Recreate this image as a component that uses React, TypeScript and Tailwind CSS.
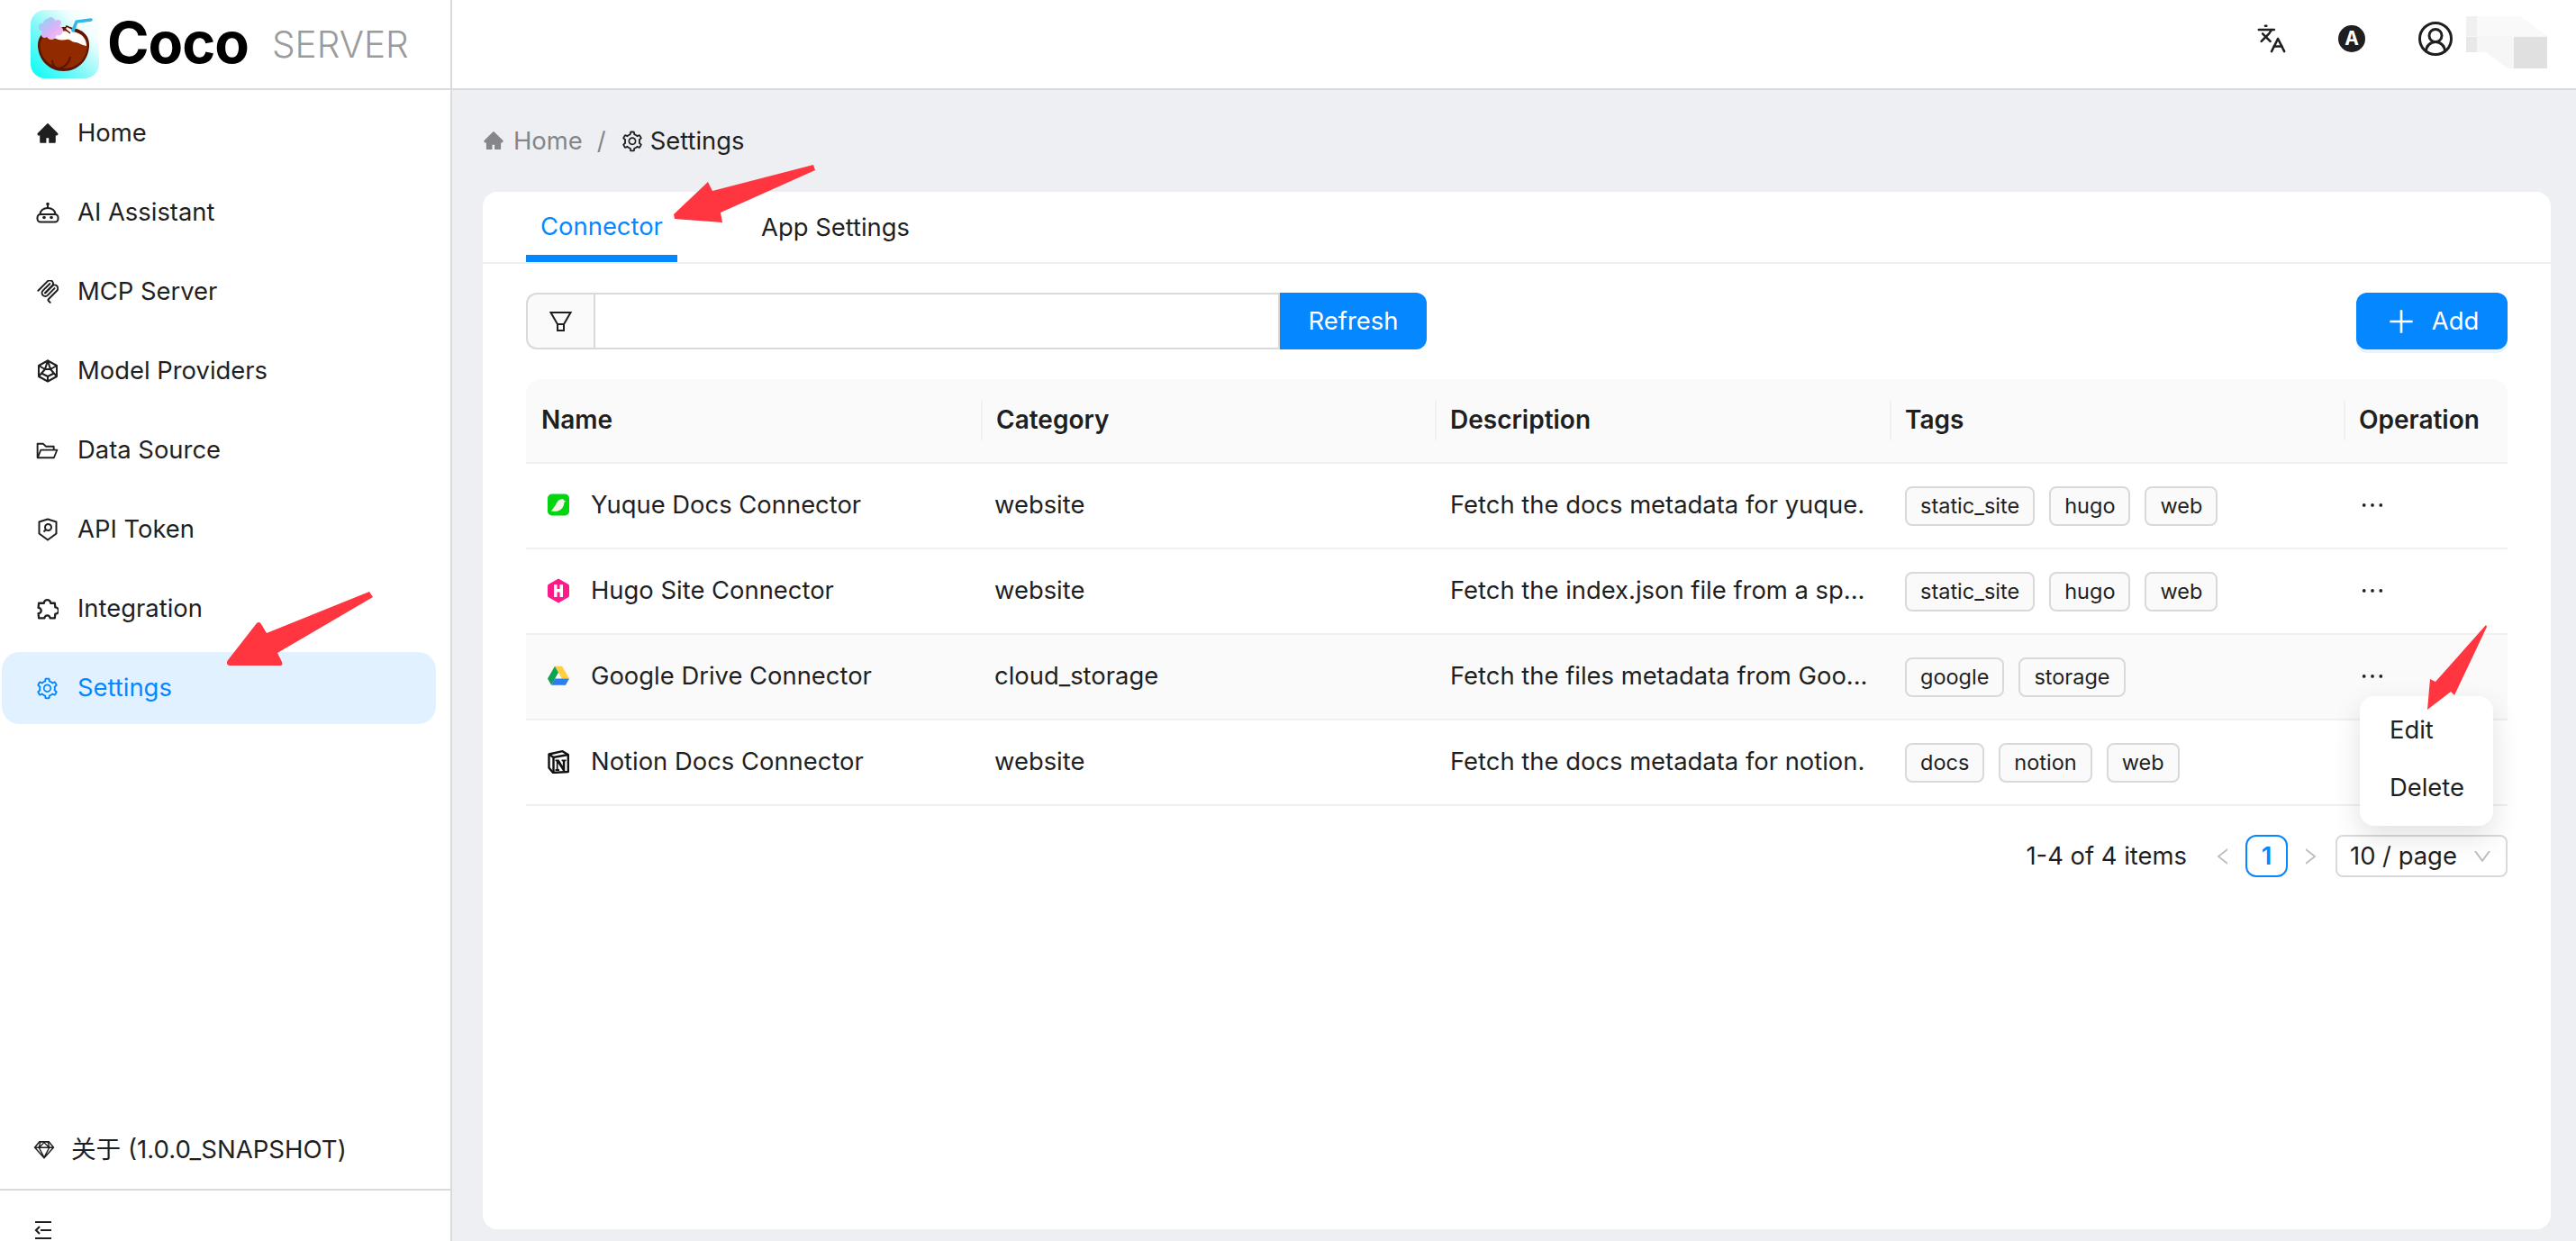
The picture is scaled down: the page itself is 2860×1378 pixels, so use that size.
import { type FC, type ReactNode } from 'react';
import { CircleUserRound, Languages } from 'lucide-react';
import {
  AiFillHome,
  AiOutlineDown,
  AiOutlineEllipsis,
  AiOutlineFolderOpen,
  AiOutlineLeft,
  AiOutlinePlus,
  AiOutlineRight,
  AiOutlineSetting,
  AiOutlineSketch,
} from 'react-icons/ai';

const RobotIcon = () => (
  <svg viewBox="0 0 26 24" className="h-[24px] w-[26px]" fill="none" stroke="currentColor" strokeWidth="2">
    <circle cx="13" cy="2.500" r="1.800" fill="currentColor" stroke="none" />
    <path d="M13 3v4" />
    <path d="M4.500 14c0-4 3.500-7 8.500-7s8.500 3 8.500 7" />
    <rect x="1.500" y="14" width="23" height="8.500" rx="3.500" />
    <circle cx="9" cy="17.500" r="1.800" fill="currentColor" stroke="none" />
    <circle cx="17" cy="17.500" r="1.800" fill="currentColor" stroke="none" />
  </svg>
);

const McpIcon = () => (
  <svg viewBox="10 8 155 170" className="h-[26px] w-[24px]" fill="none" stroke="currentColor" strokeWidth="13" strokeLinecap="round">
    <path d="M18 84.8528L85.8822 16.9706C95.2548 7.59798 110.451 7.59798 119.823 16.9706C129.196 26.3431 129.196 41.5391 119.823 50.9117L68.5581 102.177" />
    <path d="M69.2652 101.47L119.823 50.9117C129.196 41.5391 144.392 41.5391 153.765 50.9117L154.118 51.2652C163.491 60.6378 163.491 75.8338 154.118 85.2063L92.7248 146.6C89.6006 149.724 89.6006 154.789 92.7248 157.913L105.331 170.52" />
    <path d="M102.853 33.9411L52.6482 84.1457C43.2756 93.5183 43.2756 108.714 52.6482 118.087C62.0208 127.459 77.2167 127.459 86.5893 118.087L136.794 67.8822" />
  </svg>
);

const CubeIcon = () => (
  <svg viewBox="0 0 24 26" className="h-[26px] w-[24px]" fill="none" stroke="currentColor" strokeWidth="2" strokeLinejoin="round">
    <path d="M12 1.500l10 5.500v12l-10 5.500L2 19V7z" />
    <path d="M2 7l7 4 3-9.500 3 9.500 7-4M9 11l-7 8M15 11l7 8M9 11h6M6 16l6 3 6-3M12 19v5.500" />
  </svg>
);

const ShieldIcon = () => (
  <svg viewBox="0 0 22 26" className="h-[26px] w-[22px]" fill="none" stroke="currentColor" strokeWidth="2" strokeLinejoin="round">
    <path d="M11 1.500l9.500 3v13L11 24.500 1.500 17.500v-13z" />
    <circle cx="11.500" cy="10.500" r="3.500" />
    <path d="M9 13l-2.500 2.500" />
  </svg>
);

const PuzzleIcon = () => (
  <svg viewBox="0 0 24 24" className="h-[25px] w-[25px]" fill="none" stroke="currentColor" strokeWidth="2.200" strokeLinejoin="round">
    <path d="M8.500 5.500a3.500 3.500 0 0 1 7 0h4.500l.5 4.500a3.500 3.500 0 0 1 0 7l-.5 4.500h-5a3 3 0 0 0-6 0H3l-.5-5a3 3 0 0 0 0-6L3 5.500z" />
  </svg>
);

const FilterIcon = () => (
  <svg viewBox="0 0 25 22" className="h-[22px] w-[25px]" fill="none" stroke="#1f1f1f" strokeWidth="2" strokeLinejoin="miter">
    <path d="M1.500 1h22L16 14v7H9v-7z" />
    <path d="M9 14h7" />
  </svg>
);

const YuqueIcon = () => (
  <svg viewBox="0 0 25 25" className="h-[25px] w-[25px]">
    <rect width="25" height="25" rx="5" fill="#00d50f" />
    <path d="M4 20l5-7c2-3 3-7 8-7 1 0 2 .6 2.200 1.800l2.300.7-2.300 1c0 5-3 9.500-8.200 10.500z" fill="#f6f3ea" />
  </svg>
);

const HugoIcon = () => (
  <svg viewBox="0 0 24 28" className="h-[28px] w-[25px]">
    <path d="M12 .5l10.500 6c1 .6 1.500 1.500 1.500 2.500v10c0 1-.5 2-1.500 2.500L12 27.500 1.500 21.500C.5 21 0 20 0 19V9c0-1 .5-1.900 1.500-2.500z" fill="#ff1a8a" />
    <path d="M7 7h3.500v5h3V7H17v14h-3.500v-5.500h-3V21H7z" fill="#fff" />
  </svg>
);

const DriveIcon = () => (
  <svg viewBox="0 0 28 25" className="h-[25px] w-[28px]">
    <path d="M9.300 0h9.400l9.300 16h-9.400z" fill="#ffcf3f" />
    <path d="M9.300 0L0 16l4.700 8.500L14 8z" fill="#12a150" />
    <path d="M9.300 16H28l-4.700 8.500H4.700z" fill="#2d7cf0" />
  </svg>
);

const NotionIcon = () => (
  <svg viewBox="0 0 24 26" className="h-[26px] w-[24px]" fill="none">
    <path d="M1.500 4.500l15-3.300 6.300 3.800v19l-16.800 1-4.500-5.500z" fill="#fff" stroke="#111" strokeWidth="2.400" strokeLinejoin="round" />
    <path d="M1.500 4.500l5 3.500 16.300-3M6.500 8v17" stroke="#111" strokeWidth="2.400" />
    <path d="M8.500 10.500h4l4.300 7v-5l-1.300-.4v-1.600h5v1.600l-1.200.4V23h-2.300l-5.500-8.500v6.300l1.500.4V23H8.500v-1.800l1.300-.4v-8.300l-1.300-.4z" fill="#111" />
  </svg>
);

const CocoLogo = () => (
  <svg viewBox="0 0 76 76" className="h-[76px] w-[76px] shrink-0">
    <defs>
      <linearGradient id="cocoBg" x1="0" y1="1" x2="1" y2="0">
        <stop offset="0" stopColor="#00fbf5" />
        <stop offset="0.45" stopColor="#8df8f8" />
        <stop offset="0.75" stopColor="#f2fefe" />
        <stop offset="1" stopColor="#ffffff" />
      </linearGradient>
      <linearGradient id="cocoFlower" x1="0" y1="0" x2="1" y2="1">
        <stop offset="0" stopColor="#7fd8f5" />
        <stop offset="0.6" stopColor="#e3b0f7" />
        <stop offset="1" stopColor="#f4c4f8" />
      </linearGradient>
    </defs>
    <rect width="76" height="76" rx="16" fill="url(#cocoBg)" />
    <path d="M8 42c0-12 10-20 29-20s28 8 28 20c0 16-12 29-28.500 29S8 58 8 42z" transform="translate(0 -3)" fill="#5a1505" />
    <path d="M10.500 42c0-10 11-17 26.500-17s26 7 26 17c0 14-11 26-26 26S10.500 56 10.500 42z" transform="translate(0 -3)" fill="#922a00" />
    <path d="M20 28c8-5 26-6 33-2 5 2 9 7 9 14-6-1-9-4-12-4-5 0-6-4-10-3-5 1-10 1-20-5z" fill="#fff" />
    <path d="M24 56c0 5 3 9 8 9M44 52c-1 7-5 11-12 13" fill="none" stroke="#5a1505" strokeWidth="2" />
    <path d="M44 26l-6-5 2-3 8 4" fill="#f6f2f0" stroke="#5a1505" strokeWidth="1.500" />
    <path d="M47 23l4-10 16-2" fill="none" stroke="#2fb9e8" strokeWidth="3.500" strokeLinecap="round" />
    <path d="M22 8c3 0 5 2 5 4 3-2 7-1 7 2 0 2-1 3-2 4 4 1 5 5 3 8-1 2-4 3-6 2-1 3-3 5-6 5-3 0-4-2-5-3-2 2-6 1-6-2 0-2 0-3 1-4-3-1-5-3-4-6 0-3 3-4 5-3 0-3 3-5 8-7z" fill="url(#cocoFlower)" />
  </svg>
);

const Mosaic = () => (
  <svg viewBox="0 0 90 58" className="h-[58px] w-[90px]">
    <path d="M0 0h60l30 22H0z" fill="#f9f9f9" />
    <rect x="0" y="0" width="12" height="40" fill="#f0f0f0" />
    <path d="M0 22h90v36H46L22 40H0z" fill="#f6f6f6" />
    <rect x="53" y="23" width="37" height="35" fill="#e0e0e0" />
    <rect x="0" y="23" width="12" height="17" fill="#e8e8e8" />
  </svg>
);

const Arrows = () => (
  <svg viewBox="0 0 2860 1378" className="pointer-events-none absolute inset-0 z-20 h-[1378px] w-[2860px]" fill="#ff3540">
    <path d="M410 657l4 6-106 62 5 10c1 3 0 4-3 4l-55 0c-3 0-4-3-2-6l32-41c2-2 4-1 5 1l6 10z" />
    <path d="M903 183l2 6-105 47 2 11-53-4-1-5 38-36 5 10z" />
    <path d="M2760 694l1 2-36 76-4-4-26 20 3-34 6 3z" />
  </svg>
);

interface NavItem {
  label: string;
  icon: ReactNode;
  active?: boolean;
}

const navItems: NavItem[] = [
  { label: 'Home', icon: <AiFillHome size={26} /> },
  { label: 'AI Assistant', icon: <RobotIcon /> },
  { label: 'MCP Server', icon: <McpIcon /> },
  { label: 'Model Providers', icon: <CubeIcon /> },
  { label: 'Data Source', icon: <AiOutlineFolderOpen size={27} /> },
  { label: 'API Token', icon: <ShieldIcon /> },
  { label: 'Integration', icon: <PuzzleIcon /> },
  { label: 'Settings', icon: <AiOutlineSetting size={27} />, active: true },
];

interface Row {
  name: string;
  icon: ReactNode;
  category: string;
  description: string;
  tags: string[];
  hover?: boolean;
  menu?: boolean;
}

const rows: Row[] = [
  {
    name: 'Yuque Docs Connector',
    icon: <YuqueIcon />,
    category: 'website',
    description: 'Fetch the docs metadata for yuque.',
    tags: ['static_site', 'hugo', 'web'],
  },
  {
    name: 'Hugo Site Connector',
    icon: <HugoIcon />,
    category: 'website',
    description: 'Fetch the index.json file from a sp...',
    tags: ['static_site', 'hugo', 'web'],
  },
  {
    name: 'Google Drive Connector',
    icon: <DriveIcon />,
    category: 'cloud_storage',
    description: 'Fetch the files metadata from Goo...',
    tags: ['google', 'storage'],
    hover: true,
    menu: true,
  },
  {
    name: 'Notion Docs Connector',
    icon: <NotionIcon />,
    category: 'website',
    description: 'Fetch the docs metadata for notion.',
    tags: ['docs', 'notion', 'web'],
  },
];

const columns = ['Name', 'Category', 'Description', 'Tags', 'Operation'];

const Sidebar: FC = () => (
  <aside className="flex w-[502px] shrink-0 flex-col border-r-2 border-[#d9d9de] bg-white">
    <nav className="flex flex-col pt-[8px]">
      {navItems.map((item) => (
        <div
          key={item.label}
          className={`mb-[8px] ml-[2px] flex h-[80px] w-[482px] items-center rounded-[20px] text-[27.4px] ${
            item.active ? 'bg-[#e1f1ff] text-[#0587ff]' : 'text-[#1f1f1f]'
          }`}
        >
          <span className="flex w-[84px] shrink-0 items-center justify-center pl-[17px]">{item.icon}</span>
          <span>{item.label}</span>
        </div>
      ))}
    </nav>
    <div className="mt-auto flex h-[90px] items-center border-b-2 border-[#d9d9de] pt-[2px] pl-[35px] text-[27.6px] text-[#1f1f1f]">
      <AiOutlineSketch size={28} />
      <span className="ml-[16px]">关于 (1.0.0_SNAPSHOT)</span>
    </div>
    <div className="h-[56px] pt-[34px] pl-[38px]">
      <svg viewBox="0 0 20 20" className="h-[20px] w-[20px]" fill="none" stroke="#1f1f1f" strokeWidth="2.200">
        <path d="M1 1h18M7 10h12M1 19h18M6 6l-4 4 4 4" />
      </svg>
    </div>
  </aside>
);

const App: FC = () => {
  return (
    <div className="relative flex h-[1378px] w-[2860px] flex-col overflow-hidden bg-[#eeeff3] font-[Inter,'Noto_Sans_CJK_SC',sans-serif] text-[#1f1f1f]">
      <header className="flex h-[100px] shrink-0 items-center border-b-2 border-[#d9d9de] bg-white">
        <div className="flex h-full w-[502px] shrink-0 items-center border-r-2 border-[#d9d9de] pl-[34px]">
          <CocoLogo />
          <span className="mb-[4px] ml-[9px] text-[63px] leading-none font-bold tracking-[-1px] text-black">Coco</span>
          <span className="mt-[2px] ml-[26px] text-[40.5px] leading-none font-light text-[#9b9b9b]">SERVER</span>
        </div>
        <div className="ml-auto flex items-center pr-[32px] pb-[12px]">
          <Languages size={34} strokeWidth={1.8} className="text-[#1f1f1f]" />
          <span className="ml-[57px] flex h-[30px] w-[30px] items-center justify-center rounded-full bg-[#1f1f1f] text-[21px] font-bold text-white">
            A
          </span>
          <CircleUserRound size={42} strokeWidth={1.7} className="ml-[57px] text-[#1f1f1f]" />
          <span className="mt-[8px] ml-[13px]">
            <Mosaic />
          </span>
        </div>
      </header>

      <div className="flex min-h-0 flex-1">
        <Sidebar />
        <main className="flex min-w-0 flex-1 flex-col pr-[28px] pb-[13px] pl-[34px]">
          <div className="flex h-[113px] shrink-0 items-center text-[27.4px]">
            <span className="flex items-center text-[#85858a]">
              <AiFillHome size={24} />
              <span className="ml-[10px]">Home</span>
            </span>
            <span className="mr-[16px] ml-[16px] text-[#85858a]">/</span>
            <AiOutlineSetting size={26} />
            <span className="ml-[7px]">Settings</span>
          </div>

          <section className="flex flex-1 flex-col rounded-[16px] bg-white">
            <div className="flex h-[80px] shrink-0 items-end border-b-2 border-[#f0f0f0] px-[48px] text-[27.4px]">
              <div className="flex h-[80px] w-[168px] items-center justify-center border-b-8 border-[#0587ff] pt-[10px] text-[#0587ff]">
                Connector
              </div>
              <div className="ml-[93px] flex h-[80px] items-center pt-[3px]">App Settings</div>
            </div>

            <div className="flex flex-col px-[48px]">
              <div className="mt-[32px] flex h-[63px] items-center justify-between">
                <div className="flex h-full">
                  <div className="flex w-[75px] items-center justify-center rounded-l-[12px] border-2 border-r-0 border-[#d9d9d9] bg-[#fafafa]">
                    <FilterIcon />
                  </div>
                  <input className="h-full w-[762px] border-2 border-[#d9d9d9] bg-white outline-none" />
                  <button className="h-full w-[163px] rounded-r-[12px] bg-[#0587ff] text-[27.4px] text-white">Refresh</button>
                </div>
                <button className="flex h-full w-[168px] items-center justify-center rounded-[12px] bg-[#0587ff] text-[27.4px] text-white shadow-[0_4px_0_#e6f4ff]">
                  <AiOutlinePlus size={36} />
                  <span className="ml-[16px]">Add</span>
                </button>
              </div>

              <div className="mt-[33px]">
                <div className="grid h-[94px] grid-cols-[505px_504px_505px_504px_182px] rounded-t-[16px] border-b-2 border-[#f0f0f0] bg-[#fafafa] text-[28px] font-semibold">
                  {columns.map((col, i) => (
                    <div
                      key={col}
                      className={`relative flex items-center pb-[2px] pl-[17px] ${
                        i > 0
                          ? "before:absolute before:top-1/2 before:left-0 before:h-[44px] before:w-[2px] before:-translate-y-1/2 before:bg-[#f0f0f0] before:content-['']"
                          : ''
                      }`}
                    >
                      {col}
                    </div>
                  ))}
                </div>
                {rows.map((row) => (
                  <div
                    key={row.name}
                    className={`grid h-[95px] grid-cols-[505px_504px_505px_504px_182px] border-b-2 border-[#f0f0f0] text-[27.4px] ${
                      row.hover ? 'bg-[#fafafa]' : 'bg-white'
                    }`}
                  >
                    <div className="flex items-center pb-[2px] pl-[24px]">
                      <span className="flex w-[24px] justify-center">{row.icon}</span>
                      <span className="ml-[24px]">{row.name}</span>
                    </div>
                    <div className="flex items-center pb-[2px] pl-[15px]">{row.category}</div>
                    <div className="flex min-w-0 items-center pb-[2px] pl-[17px]">
                      <span className="whitespace-nowrap">{row.description}</span>
                    </div>
                    <div className="flex items-center gap-[16px] pl-[17px]">
                      {row.tags.map((tag) => (
                        <span
                          key={tag}
                          className="flex h-[44px] items-center rounded-[8px] border-2 border-[#d9d9d9] bg-[#fafafa] px-[15px] text-[23.5px]"
                        >
                          {tag}
                        </span>
                      ))}
                    </div>
                    <div className="relative flex items-center pb-[2px] pl-[15px]">
                      <AiOutlineEllipsis size={34} />
                      {row.menu && (
                        <div className="absolute top-[68px] left-[18px] z-10 flex h-[144px] w-[148px] flex-col rounded-[16px] bg-white pt-[6px] pl-[33px] text-[27.4px] shadow-[0_12px_32px_rgba(0,0,0,0.12)]">
                          <span className="flex h-[64px] items-center">Edit</span>
                          <span className="flex h-[64px] items-center">Delete</span>
                        </div>
                      )}
                    </div>
                  </div>
                ))}
              </div>

              <div className="mt-[32px] flex h-[47px] items-center justify-end text-[27.4px]">
                <span>1-4 of 4 items</span>
                <AiOutlineLeft size={24} className="ml-[28px] text-[#bdbdbd]" />
                <span className="ml-[13px] flex h-[47px] w-[47px] items-center justify-center rounded-[12px] border-2 border-[#0587ff] font-semibold text-[#0587ff]">
                  1
                </span>
                <AiOutlineRight size={24} className="ml-[13px] text-[#bdbdbd]" />
                <div className="ml-[16px] flex h-[47px] w-[191px] items-center justify-between rounded-[8px] border-2 border-[#d9d9d9] pr-[14px] pl-[14px]">
                  <span>10 / page</span>
                  <AiOutlineDown size={24} className="text-[#bdbdbd]" />
                </div>
              </div>
            </div>
          </section>
        </main>
      </div>

      <Arrows />
    </div>
  );
};

export default App;
